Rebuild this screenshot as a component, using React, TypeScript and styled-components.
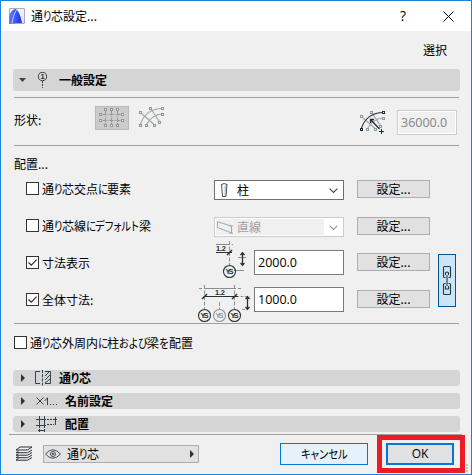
import React from "react";
import styled, { createGlobalStyle, css } from "styled-components";

const Global = createGlobalStyle`
  * { box-sizing: border-box; }
  body { margin: 0; background: #f0f0f0; }
`;

const Dialog = styled.div`
  width: 472px;
  height: 475px;
  border: 1px solid #1883d7;
  background: #f0f0f0;
  color: #000;
  font: 12px "Noto Sans CJK JP", sans-serif;
  overflow: hidden;
  svg { display: block; flex: none; overflow: visible; }
`;

const TitleBar = styled.header`
  height: 30px;
  background: #fff;
  display: flex;
  align-items: center;
  padding: 0 17px 0 8px;
`;

const Text = styled.span<{ $bold?: boolean }>`
  flex: none;
  white-space: nowrap;
  line-height: 18px;
  font-feature-settings: "palt";
  font-size: 12px;
  font-weight: ${(p) => (p.$bold ? 700 : 400)};
`;

/* Condensed kana run, as in UI fonts where kana are narrower than kanji. */
const Kana = styled.span<{ $w: number }>`
  display: inline-block;
  width: ${(p) => p.$w}px;
  transform: scaleX(0.86);
  transform-origin: 0 50%;
`;

const TitleText = styled(Text)`
  margin-left: 6px;
  flex: 1;
`;

const HelpMark = styled.span`
  font: 14px "Open Sans", sans-serif;
  line-height: 18px;
  width: 43px;
`;

const SelectionInfo = styled.div`
  height: 38px;
  display: flex;
  align-items: center;
  justify-content: flex-end;
  padding-right: 24px;
`;

const SectionHeader = styled.div<{ $tall?: boolean }>`
  height: ${(p) => (p.$tall ? 22 : 16)}px;
  margin: 0 11px 0 12px;
  border-radius: 3px;
  background: #d5d5d5;
  display: flex;
  align-items: center;
`;

const HeaderIcon = styled.span<{ $w: number; $left?: number }>`
  width: ${(p) => p.$w}px;
  padding-left: ${(p) => p.$left ?? 0}px;
  flex: none;
`;

const Rule = styled.div<{ $wide?: boolean }>`
  height: 1px;
  margin: ${(p) => (p.$wide ? "0 9px 0 8px" : "0 12px 0 13px")};
  background: #a0a0a0;
`;

const Spacer = styled.div<{ $h: number }>`
  height: ${(p) => p.$h}px;
`;

const ShapeRow = styled.div`
  height: 47px;
  display: flex;
  align-items: flex-start;
  padding: 8px 14px 0 13px;
`;

const ShapeLabel = styled(Text)`
  margin-top: 5px;
  width: 81px;
`;

const ShapeButton = styled.div`
  width: 34px;
  height: 24px;
  border: 1px solid #b9b9b9;
  background: #cccccc;
  display: flex;
  margin-right: 9px;
`;

const RadiusGroup = styled.div`
  display: flex;
  gap: 12px;
  margin: 4px 0 0 auto;
`;

const Field = styled.div<{ $w: number; $off?: boolean }>`
  width: ${(p) => p.$w}px;
  height: 25px;
  padding-left: 3px;
  border: 1px solid ${(p) => (p.$off ? "#cccccc" : "#7a7a7a")};
  background: ${(p) => (p.$off ? "#f0f0f0" : "#fff")};
  box-shadow: inset 0 0 0 1px #fff;
  color: ${(p) => (p.$off ? "#838383" : "#000")};
  font: 12.5px "Open Sans", sans-serif;
  line-height: 24px;
`;

const PlacementTitle = styled.div`
  height: 34px;
  padding: 9px 0 0 13px;
`;

const Row = styled.div<{ $h: number }>`
  height: ${(p) => p.$h}px;
  display: flex;
  align-items: flex-start;
  padding-left: 25px;
`;

const CheckLabel = styled.div<{ $w?: number; $top?: number }>`
  display: flex;
  align-items: center;
  height: 13px;
  gap: 3px;
  margin-top: ${(p) => p.$top ?? 2}px;
  ${(p) => p.$w && css`width: ${p.$w}px;`}
  flex: none;
`;

const Box = styled.span`
  width: 13px;
  height: 13px;
  flex: none;
  border: 1px solid #333;
  background: #fff;
`;

const Combo = styled.div<{ $off?: boolean }>`
  width: 130px;
  height: 20px;
  margin-right: 13px;
  border: 1px solid ${(p) => (p.$off ? "#cccccc" : "#707070")};
  background: ${(p) => (p.$off ? "#f0f0f0" : "#fff")};
  box-shadow: inset 0 0 0 1px #fff;
  color: ${(p) => (p.$off ? "#a0a0a0" : "#000")};
  display: flex;
  align-items: center;
`;

const ComboArrow = styled.span`
  width: 19px;
  height: 18px;
  margin-left: auto;
  background: #fff;
  padding: 7px 0 0 5px;
`;

const SettingsButton = styled.div`
  width: 73px;
  height: 18px;
  border: 1px solid #adadad;
  background: #e1e1e1;
  display: flex;
  align-items: center;
  justify-content: center;
`;

const Dimensions = styled.div`
  height: 83px;
  display: flex;
  padding-left: 25px;
`;

const Column = styled.div<{ $top: number; $gap: number; $w: number }>`
  display: flex;
  flex-direction: column;
  padding-top: ${(p) => p.$top}px;
  gap: ${(p) => p.$gap}px;
  width: ${(p) => p.$w}px;
  flex: none;
`;

const LinkButton = styled.div`
  width: 18px;
  height: 53px;
  margin-top: 14px;
  border: 1px solid #005499;
  background: #cce4f7;
`;

const PerimeterRow = styled.div`
  height: 46px;
  padding-left: 13px;
  display: flex;
`;

const Sections = styled.div`
  display: flex;
  flex-direction: column;
  gap: 7px;
  height: 64px;
`;

const Footer = styled.footer`
  height: 39px;
  display: flex;
  align-items: flex-start;
  padding-left: 14px;
`;

const LayerPicker = styled.div`
  width: 156px;
  height: 18px;
  margin: 10px 81px 0 11px;
  border: 1px solid #adadad;
  background: #e1e1e1;
  display: flex;
  align-items: center;
  gap: 6px;
  padding: 0 3px 0 1px;
`;

const LayerName = styled(Text)`
  flex: 1;
`;

const CancelButton = styled.div`
  width: 88px;
  height: 22px;
  margin: 8px 9px 0 0;
  border: 1px solid #0078d7;
  background: #e5f1fb;
  display: flex;
  align-items: center;
  justify-content: center;
`;

const Highlight = styled.div`
  width: 88px;
  height: 38px;
  border: 5px solid #ed1c24;
  padding: 3px 6px 3px 4px;
`;

const OkButton = styled.div`
  width: 68px;
  height: 22px;
  border: 2px solid #0078d7;
  background: #e1e1e1;
  text-align: center;
  font: 12px "Open Sans", sans-serif;
  line-height: 18px;
`;

const Grip = styled.div`
  display: flex;
  flex-direction: column;
  gap: 1px;
  margin: 29px 0 0 1px;
  i { width: 2px; height: 2px; background: #c4c4c4; }
`;

const Triangle = ({ down = false }: { down?: boolean }) =>
  down ? (
    <svg width="8" height="5"><path d="M0 0H7L3.5 4Z" fill="#404040" /></svg>
  ) : (
    <svg width="5" height="8"><path d="M0 0V8L4 4Z" fill="#303030" /></svg>
  );

const Check = ({ on = false }: { on?: boolean }) => (
  <Box>
    {on && <svg width="11" height="11"><path d="M1.5 5.5L4.3 8.2L9.6 2.6" fill="none" stroke="#333" strokeWidth="1.2" /></svg>}
  </Box>
);

const Chevron = ({ color }: { color: string }) => (
  <svg width="9" height="6"><path d="M.6.6L4.5 4.5L8.4.6" fill="none" stroke={color} strokeWidth="1.1" /></svg>
);

const Node = ({ x, y, c = "#929799" }: { x: number; y: number; c?: string }) => (
  <rect x={x - 1} y={y - 1} width="2" height="2" fill="#f0f0f0" stroke={c} />
);

const RectGridIcon = () => (
  <svg width="32" height="22">
    <g stroke="#929799" fill="none" strokeDasharray="4 1 1 1">
      <path d="M6.5 7.5H25M6.5 13.5H25" />
      <path d="M9.5 4V17M15.5 4V17M21.5 4V17" />
    </g>
    {[9.5, 15.5, 21.5].map((x) => <React.Fragment key={x}><Node x={x} y={2.5} /><Node x={x} y={18.5} /></React.Fragment>)}
    {[7.5, 13.5].map((y) => <React.Fragment key={y}><Node x={4.5} y={y} /><Node x={26.5} y={y} /></React.Fragment>)}
  </svg>
);

const CurvedGridIcon = ({ active = false }: { active?: boolean }) => (
  <svg width="26" height="24">
    <path d="M8.5 18.5Q14 9 23.5 8M3 7L16 18.5M13 3L21 15" fill="none" stroke="#a0a4a6" strokeWidth="1.1" />
    <path d="M2.5 18Q8 2.5 24.5 2.5" fill="none" stroke={active ? "#263238" : "#a0a4a6"} strokeWidth="1.1" />
    {[[2.5, 6.5], [12.5, 2.5], [24.5, 8.5], [8.5, 19.5], [16.5, 19.5], [21.5, 16.5]].map(([x, y]) => <Node key={x} x={x} y={y} />)}
    <Node x={2.5} y={19.5} c={active ? "#202b31" : "#929799"} />
    <Node x={24.5} y={2.5} c={active ? "#202b31" : "#929799"} />
    {active && (
      <g stroke="#202b31" fill="none">
        <path d="M12 10L20.5 19M11.5 13V9.5H15" strokeWidth="1.3" />
        <path d="M20 21.5H25M22.5 19V24" />
      </g>
    )}
  </svg>
);

const Marker = ({ x, y, c = "#263238" }: { x: number; y: number; c?: string }) => (
  <g>
    <circle cx={x} cy={y} r="6" fill="none" stroke={c} strokeWidth="1.1" />
    <text x={x} y={y + 2.7} textAnchor="middle" fill={c} textLength="8" fontFamily="Liberation Sans" fontSize="7.5" fontWeight="700">YS</text>
  </g>
);

const DimensionIcon = () => (
  <svg width="56" height="83">
    <g fill="none" stroke="#8c8f90">
      <path d="M20 4.5H37M42 17.5H50M38 30.5H48" strokeDasharray="14 1.5 3 1.5" />
      <path d="M33.5 1V25M8.5 45V69M23.5 62V69M38.5 45V69" strokeDasharray="4 1.5" />
      <path d="M3 48.5H45" strokeDasharray="3 2 32 2" />
      <path d="M40 56.5H54M46 69.5H52" strokeDasharray="3 1.5" />
    </g>
    <g stroke="#263238" fill="none">
      <path d="M20 12.5H36M8 56.5H42" strokeWidth="1.1" />
      <path d="M31 15L36 10M6 59L11 54M36 59L41 54" strokeWidth="1.5" />
      <path d="M46.5 13V25M44.5 15L46.5 12.7L48.5 15M44.5 23L46.5 25.3L48.5 23" strokeWidth="1.3" />
      <path d="M51.5 57V69M49.5 59L51.5 56.7L53.5 59M49.5 67L51.5 69.3L53.5 67" strokeWidth="1.3" />
    </g>
    <g fill="#263238" fontFamily="Liberation Sans" fontWeight="700" fontSize="7.5">
      <text x="20" y="11" textLength="10">1.2</text>
      <text x="19" y="55" textLength="10">1.2</text>
    </g>
    <Marker x={33.5} y={31.5} />
    <Marker x={8.5} y={75.5} />
    <Marker x={23.5} y={75.5} c="#949899" />
    <Marker x={38.5} y={75.5} />
  </svg>
);

const LinkIcon = () => (
  <svg width="16" height="51" fill="none" stroke="#25363f" strokeWidth="1.1">
    <path d="M6.5 22.5H5.5Q4.5 22.5 4.5 21.5V12.5Q4.5 11.5 5.5 11.5H10.5Q11.5 11.5 11.5 12.5V21.5Q11.5 22.5 10.5 22.5H9.5" />
    <path d="M6.5 28.5H5.5Q4.5 28.5 4.5 29.5V38.5Q4.5 39.5 5.5 39.5H10.5Q11.5 39.5 11.5 38.5V29.5Q11.5 28.5 10.5 28.5H9.5" />
    <path d="M6.5 20V18Q6.5 17 8 17Q9.5 17 9.5 18V20M6.5 31V34H9.5V31M8 20V31" />
  </svg>
);

const AppIcon = () => (
  <svg width="16" height="16">
    <defs>
      <linearGradient id="blue"><stop stopColor="#5f7dff" /><stop offset="1" stopColor="#1b30e6" /></linearGradient>
      <linearGradient id="silver" x2="1" y2="1"><stop stopColor="#fff" /><stop offset="1" stopColor="#dfe2ee" /></linearGradient>
    </defs>
    <rect x=".5" y=".5" width="15" height="15" rx=".5" fill="url(#silver)" stroke="#a3a9c0" />
    <path d="M0 16V9Q2 1 7 1Q11 4 13 15H7L3 16Z" fill="url(#blue)" />
    <path d="M3 16Q4 7 7.5 2" fill="none" stroke="#a9bcff" strokeWidth="1.1" />
  </svg>
);

const AxisIcon = () => (
  <svg width="11" height="18">
    <circle cx="5.5" cy="5.5" r="4.1" fill="none" stroke="#34434a" />
    <text x="3.4" y="8.3" fill="#263238" fontFamily="Liberation Sans" fontSize="7.5" fontWeight="700">1</text>
    <path d="M5.5 10V17" stroke="#34434a" strokeDasharray="2 1" />
  </svg>
);

const SplitIcon = () => (
  <svg width="17" height="16" fill="none" stroke="#34434a">
    <path d="M5 1.5H.5V13.5H5M10 1.5H15.5V13.5H10" />
    <path d="M7.5 0V15.5" strokeDasharray="3 1.2" />
    <path d="M10 6L14 2M10 10L15 5M10 13L15 9" />
  </svg>
);

const PlacementIcon = () => (
  <svg width="21" height="16" fill="none" stroke="#34434a">
    <path d="M0 3.5H10M0 9.5H10M3.5 0V12M8.5 0V12M2 14.5H9M3.5 13V16M8.5 13V16M19.5 1V9" />
    <path d="M11 3.5H21M11 8.5H18" strokeDasharray="2 1" />
  </svg>
);

const LayersIcon = () => (
  <svg width="18" height="15" fill="none" stroke="#263238">
    <path d="M5 1H17L12.5 4H1ZM3.5 5.2L1 6.7H12.5L17 4M3.5 7.8L1 9.2H12.5L17 6.5M3.5 10.3L1 11.7H12.5L17 9M3.5 12.5L1 14.2H12.5L17 11.5" />
  </svg>
);

const EyeIcon = () => (
  <svg width="16" height="10" fill="none" stroke="#46525a">
    <path d="M.5 5Q7.8-3.5 15.5 5Q7.8 13.5.5 5Z" />
    <circle cx="8" cy="5" r="2.5" /><circle cx="8" cy="5" r=".8" fill="#46525a" />
  </svg>
);

const AxisName = () => <>通<Kana $w={8}>り</Kana>芯</>;

export default function App() {
  return (
    <Dialog>
      <Global />
      <TitleBar>
        <AppIcon />
        <TitleText><AxisName />設定...</TitleText>
        <HelpMark>?</HelpMark>
        <svg width="11" height="11"><path d="M.5.5L10.5 10.5M10.5.5L.5 10.5" stroke="#000" /></svg>
      </TitleBar>
      <SelectionInfo><Text>選択</Text></SelectionInfo>
      <SectionHeader $tall>
        <HeaderIcon $w={24} $left={6}><Triangle down /></HeaderIcon>
        <HeaderIcon $w={22}><AxisIcon /></HeaderIcon>
        <Text $bold>一般設定</Text>
      </SectionHeader>
      <Spacer $h={6} />
      <Rule />
      <ShapeRow>
        <ShapeLabel>形状:</ShapeLabel>
        <ShapeButton><RectGridIcon /></ShapeButton>
        <CurvedGridIcon />
        <RadiusGroup>
          <CurvedGridIcon active />
          <Field $w={60} $off>36000.0</Field>
        </RadiusGroup>
      </ShapeRow>
      <Rule />
      <PlacementTitle><Text>配置...</Text></PlacementTitle>
      <Row $h={37}>
        <CheckLabel $w={188}>
          <Check />
          <Text><AxisName />交点<Kana $w={9}>に</Kana>要素</Text>
        </CheckLabel>
        <Combo>
          <HeaderIcon $w={22} $left={6}>
            <svg width="7" height="14" fill="none" stroke="#45545c"><path d="M.5 1L1.5 13.5H5L6 1M.5 1.5Q3.2-.5 6 1.5" /><path d="M4.2 2.5V13" stroke="#9aa4a9" /></svg>
          </HeaderIcon>
          <Text>柱</Text>
          <ComboArrow><Chevron color="#444" /></ComboArrow>
        </Combo>
        <SettingsButton><Text>設定...</Text></SettingsButton>
      </Row>
      <Row $h={23}>
        <CheckLabel $w={188}>
          <Check />
          <Text><AxisName />線<Kana $w={9}>に</Kana><Kana $w={44}>デフォルト</Kana>梁</Text>
        </CheckLabel>
        <Combo $off>
          <HeaderIcon $w={22} $left={2}>
            <svg width="16" height="13" fill="none" stroke="#a2a6a8"><path d="M.5.8L14.5 5V12L.5 6.5ZM12.5 5H16M12.5 12H16" /></svg>
          </HeaderIcon>
          <Text>直線</Text>
          <ComboArrow><Chevron color="#999" /></ComboArrow>
        </Combo>
        <SettingsButton><Text>設定...</Text></SettingsButton>
      </Row>
      <Dimensions>
        <Column $top={14} $gap={22} $w={170}>
          <CheckLabel><Check on /><Text>寸法表示</Text></CheckLabel>
          <CheckLabel><Check on /><Text>全体寸法:</Text></CheckLabel>
        </Column>
        <Column $top={0} $gap={0} $w={58}><DimensionIcon /></Column>
        <Column $top={10} $gap={12} $w={103}>
          <Field $w={90}>2000.0</Field>
          <Field $w={90}>1000.0</Field>
        </Column>
        <Column $top={13} $gap={19} $w={81}>
          <SettingsButton><Text>設定...</Text></SettingsButton>
          <SettingsButton><Text>設定...</Text></SettingsButton>
        </Column>
        <LinkButton><LinkIcon /></LinkButton>
      </Dimensions>
      <Rule />
      <PerimeterRow>
        <CheckLabel $top={12}>
          <Check />
          <Text>
            <AxisName />外周内<Kana $w={9}>に</Kana>柱<Kana $w={28}>および</Kana>梁<Kana $w={10}>を</Kana>配置
          </Text>
        </CheckLabel>
      </PerimeterRow>
      <Sections>
        <SectionHeader>
          <HeaderIcon $w={22} $left={8}><Triangle /></HeaderIcon>
          <HeaderIcon $w={24}><SplitIcon /></HeaderIcon>
          <Text $bold><AxisName /></Text>
        </SectionHeader>
        <SectionHeader>
          <HeaderIcon $w={23} $left={8}><Triangle /></HeaderIcon>
          <HeaderIcon $w={29}>
            <svg width="22" height="8" fill="none" stroke="#34434a"><path d="M.5.5L7.5 7.5M7.5.5L.5 7.5M8.5 4L11.5.8V8" /><path d="M14 7.5H22" strokeDasharray="1 2" /></svg>
          </HeaderIcon>
          <Text $bold>名前設定</Text>
        </SectionHeader>
        <SectionHeader>
          <HeaderIcon $w={23} $left={8}><Triangle /></HeaderIcon>
          <HeaderIcon $w={29}><PlacementIcon /></HeaderIcon>
          <Text $bold>配置</Text>
        </SectionHeader>
      </Sections>
      <Rule $wide />
      <Footer>
        <Column $top={11} $gap={0} $w={17}><LayersIcon /></Column>
        <LayerPicker><EyeIcon /><LayerName><AxisName /></LayerName><Triangle /></LayerPicker>
        <CancelButton><Text><Kana $w={47}>キャンセル</Kana></Text></CancelButton>
        <Highlight><OkButton>OK</OkButton></Highlight>
        <Grip><i /><i /><i /></Grip>
      </Footer>
    </Dialog>
  );
}
